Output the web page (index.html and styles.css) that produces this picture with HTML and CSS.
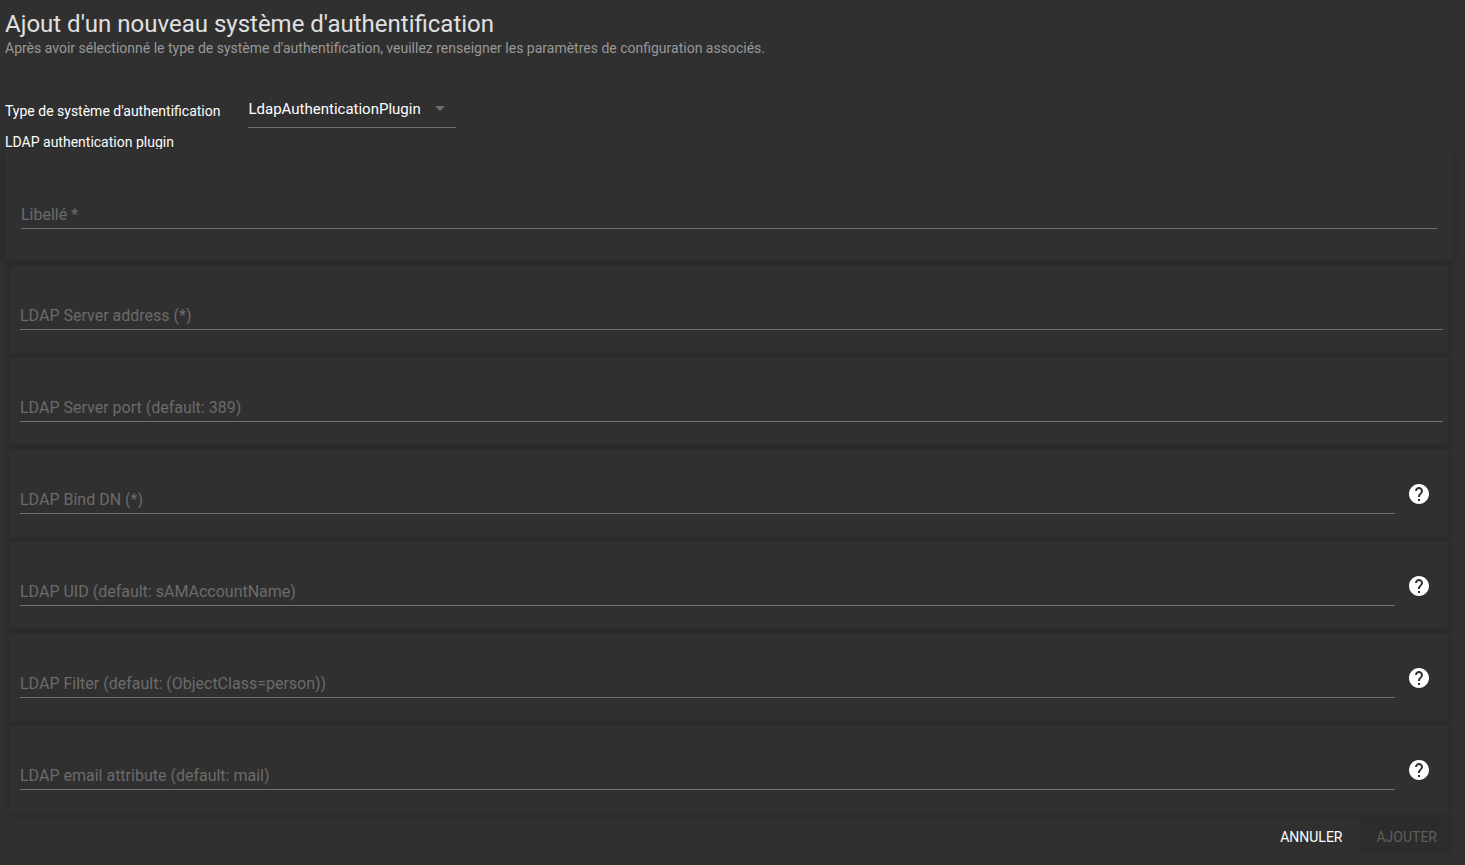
FILE: index.html
```
<!DOCTYPE html>
<html lang="fr">
<head>
<meta charset="utf-8">
<title>Ajout d'un nouveau système d'authentification</title>
<link rel="stylesheet" href="styles.css">
</head>
<body>
<svg class="sprite" aria-hidden="true">
  <symbol id="help" viewBox="0 0 24 24"><path d="M12 2C6.48 2 2 6.48 2 12s4.480 10 10 10 10-4.480 10-10S17.520 2 12 2zm1 17h-2v-2h2v2zm2.070-7.750l-.9.920C13.450 12.900 13 13.500 13 15h-2v-.5c0-1.100.45-2.100 1.170-2.830l1.240-1.260c.37-.36.59-.86.59-1.410 0-1.100-.9-2-2-2s-2 .9-2 2H8c0-2.210 1.790-4 4-4s4 1.790 4 4c0 .88-.36 1.680-.93 2.250z"/></symbol>
</svg>
<main class="page">
  <header class="heading">
    <h1 class="title">Ajout d'un nouveau système d'authentification</h1>
    <p class="subtitle">Après avoir sélectionné le type de système d'authentification, veuillez renseigner les paramètres de configuration associés.</p>
  </header>
  <form class="form">
    <div class="type-row">
      <label class="type-label" for="type">Type de système d'authentification</label>
      <div class="select-wrap">
        <select class="select" id="type"><option>LdapAuthenticationPlugin</option></select>
        <svg class="arrow" viewBox="0 0 10 5" aria-hidden="true"><path d="M0 0h10L5 5z"/></svg>
      </div>
    </div>
    <h2 class="plugin-name">LDAP authentication plugin</h2>
    <section class="card card-main">
      <div class="field"><label class="field-label" for="name">Libellé *</label><input class="input" id="name" type="text" required></div>
    </section>
    <div class="params">
      <section class="card param">
        <div class="field"><label class="field-label" for="server">LDAP Server address (*)</label><input class="input" id="server" type="text"></div>
      </section>
      <section class="card param">
        <div class="field"><label class="field-label" for="port">LDAP Server port (default: 389)</label><input class="input" id="port" type="text"></div>
      </section>
      <section class="card param">
        <div class="field"><label class="field-label" for="bind">LDAP Bind DN (*)</label><input class="input" id="bind" type="text"></div>
        <button class="help" type="button" aria-label="Aide"><svg class="help-icon"><use href="#help"/></svg></button>
      </section>
      <section class="card param">
        <div class="field"><label class="field-label" for="uid">LDAP UID (default: sAMAccountName)</label><input class="input" id="uid" type="text"></div>
        <button class="help" type="button" aria-label="Aide"><svg class="help-icon"><use href="#help"/></svg></button>
      </section>
      <section class="card param">
        <div class="field"><label class="field-label" for="filter">LDAP Filter (default: (ObjectClass=person))</label><input class="input" id="filter" type="text"></div>
        <button class="help" type="button" aria-label="Aide"><svg class="help-icon"><use href="#help"/></svg></button>
      </section>
      <section class="card param">
        <div class="field"><label class="field-label" for="mail">LDAP email attribute (default: mail)</label><input class="input" id="mail" type="text"></div>
        <button class="help" type="button" aria-label="Aide"><svg class="help-icon"><use href="#help"/></svg></button>
      </section>
    </div>
    <div class="actions">
      <button class="button" type="button">ANNULER</button>
      <button class="button button-submit" type="submit" disabled>AJOUTER</button>
    </div>
  </form>
</main>
</body>
</html>
```
FILE: styles.css
```
* { box-sizing: border-box; }
body {
  margin: 0;
  background: #303030;
  color: #fff;
  font-family: Roboto, "Liberation Sans", sans-serif;
  font-size: 14px;
}
.sprite { display: none; }
.page { padding: 8px 12px 8px 5px; }
.title {
  margin: 0;
  color: #e0e0e0;
  font-size: 24px;
  font-weight: 400;
  line-height: 32px;
}
.subtitle {
  margin: 0;
  color: #989898;
  line-height: 16px;
}
.type-row {
  display: flex;
  align-items: center;
  gap: 28px;
  margin-top: 34px;
}
.type-label { line-height: 16px; padding-top: 4px; }
.select-wrap { display: grid; align-items: center; width: 208px; }
.select, .arrow { grid-area: 1 / 1; }
.select {
  width: 100%;
  height: 38px;
  padding: 0 32px 0 0;
  border: 0;
  border-bottom: 1px solid #707070;
  border-radius: 0;
  background: none;
  color: #fff;
  font: 15px Roboto, "Liberation Sans", sans-serif;
  appearance: none;
  outline: none;
}
.select option { background: #303030; }
.arrow {
  justify-self: end;
  width: 10px;
  height: 5px;
  margin: 0 11px 2px 0;
  fill: #6e6e6e;
  pointer-events: none;
}
.plugin-name {
  margin: 7px 0 0;
  font-size: 14px;
  font-weight: 400;
  line-height: 14px;
}
.card {
  position: relative;
  border-radius: 2px;
  background: #303030;
  box-shadow: 0 1px 8px rgba(0, 0, 0, .2);
}
.card-main { padding: 50px 16px 32px; }
.params {
  display: flex;
  flex-direction: column;
  gap: 5px;
  padding: 5px;
}
.param {
  display: flex;
  align-items: flex-start;
  gap: 12px;
  padding: 32px 5px 23px 10px;
}
.card-main .field { padding-top: 0; }
.field { display: grid; flex: 1; padding-top: 2px; }
.field-label, .input { grid-area: 1 / 1; }
.field-label {
  align-self: center;
  padding-top: 2px;
  color: #6b6b6b;
  font-size: 16px;
  line-height: 20px;
  pointer-events: none;
}
.input {
  width: 100%;
  height: 30px;
  padding: 0;
  border: 0;
  border-bottom: 1px solid #707070;
  background: none;
  color: #fff;
  font: 16px Roboto, "Liberation Sans", sans-serif;
  outline: none;
}
.input:focus { border-color: #fff; }
.help {
  width: 24px;
  height: 24px;
  margin-right: 12px;
  padding: 0;
  border: 0;
  background: none;
  color: #fff;
}
.help-icon { display: block; width: 24px; height: 24px; fill: currentColor; }
.actions { display: flex; justify-content: flex-end; gap: 2px; }
.button {
  height: 36px;
  padding: 2px 16px 0;
  border: 0;
  border-radius: 2px;
  background: none;
  color: #fff;
  font: 14px Roboto, "Liberation Sans", sans-serif;
}
.button-submit { background: #2c2c2c; color: #5e5e5e; }
```
